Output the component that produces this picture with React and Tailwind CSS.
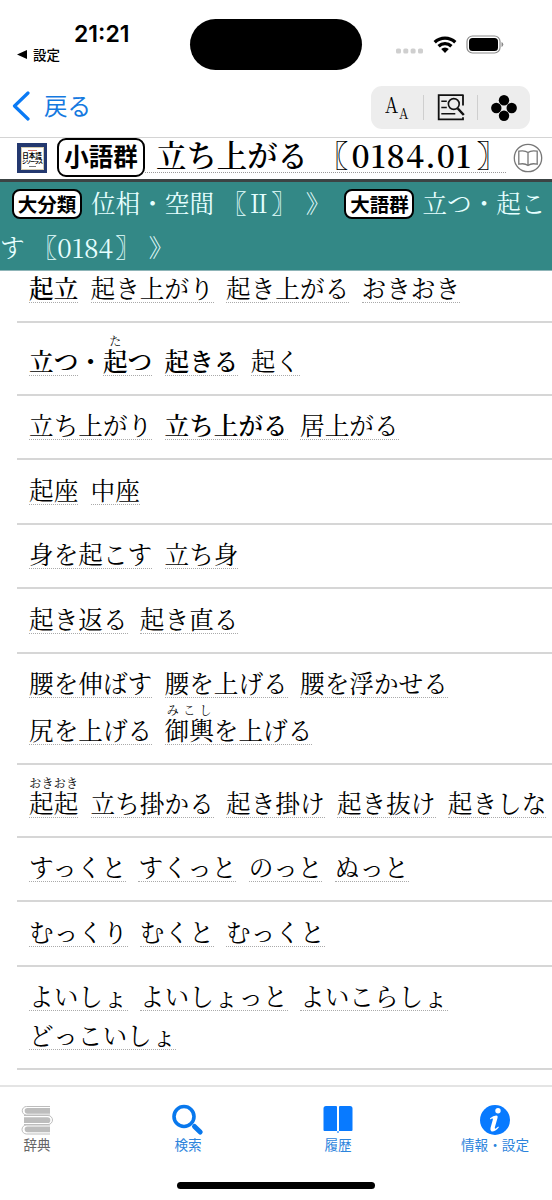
import React from "react";

const mincho = "font-['Noto_Serif_CJK_JP','Noto_Sans_CJK_JP',serif]";
const gothic = "font-['Noto_Sans_CJK_JP',sans-serif]";

// A word carries its text, an optional bold flag, and optional ruby as [base, reading].
const rows = [
  { h: "h-[52px]", lines: [[{ t: "起立", b: true }, { t: "起き上がり" }, { t: "起き上がる" }, { t: "おきおき" }]] },
  {
    h: "h-[73px]",
    lines: [[{ group: [{ t: "立つ", b: true }, { t: "・", b: true, plain: true }, { ruby: ["起", "た"], t: "つ", b: true }] }, { t: "起きる", b: true }, { t: "起く" }]],
  },
  { h: "h-[64px]", lines: [[{ t: "立ち上がり" }, { t: "立ち上がる", b: true }, { t: "居上がる" }]] },
  { h: "h-[65px]", lines: [[{ t: "起座" }, { t: "中座" }]] },
  { h: "h-[64px]", lines: [[{ t: "身を起こす" }, { t: "立ち身" }]] },
  { h: "h-[65px]", lines: [[{ t: "起き返る" }, { t: "起き直る" }]] },
  {
    h: "h-[111px]",
    gap: "gap-[17px]",
    lines: [
      [{ t: "腰を伸ばす" }, { t: "腰を上げる" }, { t: "腰を浮かせる" }],
      [{ t: "尻を上げる" }, { ruby: ["御輿", "みこし"], t: "を上げる" }],
    ],
  },
  {
    h: "h-[73px]",
    lines: [[{ ruby: ["起起", "おきおき"], t: "" }, { t: "立ち掛かる" }, { t: "起き掛け" }, { t: "起き抜け" }, { t: "起きしな" }]],
  },
  { h: "h-[64px]", lines: [[{ t: "すっくと" }, { t: "すくっと" }, { t: "のっと" }, { t: "ぬっと" }]] },
  { h: "h-[65px]", lines: [[{ t: "むっくり" }, { t: "むくと" }, { t: "むっくと" }]] },
  {
    h: "h-[103px]",
    gap: "gap-[9px]",
    lines: [[{ t: "よいしょ" }, { t: "よいしょっと" }, { t: "よいこらしょ" }], [{ t: "どっこいしょ" }]],
  },
];

function Word({ w }) {
  if (w.group) {
    return (
      <span className="flex">
        {w.group.map((g, i) => (
          <Word key={i} w={g} />
        ))}
      </span>
    );
  }
  return (
    <span
      className={`flex h-[30px] border-b leading-[30px] ${w.plain ? "border-transparent" : "border-dotted border-[#aaa]"} ${
        w.b ? "font-semibold" : "font-normal"
      }`}
    >
      {w.ruby && (
        <span className="relative">
          {w.ruby[0]}
          <span className="absolute -top-[12px] left-0 flex w-full justify-around text-[12px] leading-[14px] font-normal">
            {[...w.ruby[1]].map((c, i) => (
              <span key={i}>{c}</span>
            ))}
          </span>
        </span>
      )}
      {w.t}
    </span>
  );
}

function StatusBar() {
  return (
    <div className="flex h-[75px] shrink-0">
      <div className="w-[190px] pt-[20px]">
        <div className="pl-[74px] font-['Inter',sans-serif] text-[23px] leading-[29px] font-semibold">21:21</div>
        <div className={`flex items-center pl-[17px] text-[13.5px] leading-[10px] font-medium ${gothic}`}>
          <svg className="mr-[6px] h-[9px] w-[10px]" viewBox="0 0 10 9">
            <path d="M10 0v9L0 4.5z" />
          </svg>
          設定
        </div>
      </div>
      <div className="mt-[19px] h-[51px] w-[172px] rounded-full bg-black" />
      <div className="flex pl-[34px]">
        <svg className="mt-[48px] h-[6px] w-[28px]" viewBox="0 0 28 6" fill="#cfcfcf">
          <rect x="0" y=".5" width="5" height="5" rx="1.6" />
          <rect x="7.3" y=".5" width="5" height="5" rx="1.6" />
          <rect x="14.6" y=".5" width="5" height="5" rx="1.6" />
          <rect x="22" y=".5" width="5" height="5" rx="1.6" />
        </svg>
        <svg className="mt-[36px] ml-[9px] h-[17px] w-[24px]" viewBox="0 0 24 17" fill="none" stroke="#000" strokeWidth="3.3">
          <path d="M1.7 6.2a14.8 14.8 0 0 1 20.6 0M5.6 10.2a9.2 9.2 0 0 1 12.8 0" />
          <path d="M8.2 13.1a5.4 5.4 0 0 1 7.6 0L12 17z" fill="#000" stroke="none" />
        </svg>
        <svg className="mt-[35px] ml-[9px] h-[19px] w-[38px]" viewBox="0 0 38 19">
          <rect x="1" y="1" width="33" height="17" rx="5.5" fill="none" stroke="#8c8c8c" strokeWidth="1.2" />
          <rect x="3" y="3" width="29" height="13" rx="3.5" />
          <path d="M35.5 7v5q1.8-.6 1.8-2.5T35.500 7z" fill="#888" />
        </svg>
      </div>
    </div>
  );
}

function NavBar() {
  return (
    <div className="flex h-[63px] shrink-0 justify-between border-b border-[#d4d4d4] pr-[22px] pl-[12px]">
      <div className={`flex h-full items-center text-[23.5px] text-[#1479e0] ${gothic}`}>
        <svg className="mr-[14px] h-[30px] w-[18px]" viewBox="0 0 18 30" fill="none" stroke="#0a7af5" strokeWidth="3.2" strokeLinecap="round" strokeLinejoin="round">
          <path d="M16 2 2.500 15 16 28" />
        </svg>
        戻る
      </div>
      <div className="mt-[11px] flex h-[43px] w-[159px] items-center rounded-[11px] bg-[#ededed]">
        <div className={`flex h-[43px] w-[52px] pl-[14px] leading-none ${mincho}`}>
          <span className="mt-[7px] w-[14px] origin-left scale-x-[.82] text-[22px]">A</span>
          <span className="mt-[20px] origin-left scale-x-90 text-[14.5px]">A</span>
        </div>
        <div className="h-[25px] w-px bg-[#cfcfcf]" />
        <div className="flex w-[53px] justify-center">
          <svg className="-mt-[1px] h-[27px] w-[28px]" viewBox="0 0 28 27" fill="none" stroke="#111">
            <path d="M26 1.200H1.700V25.300H26v-2M26 0.500v11" strokeWidth="1.800" />
            <path d="M4.300 7.300h5.500M4.300 13.500h5.500M4.300 19.800h14" strokeWidth="1.500" />
            <circle cx="16.800" cy="10" r="5.400" strokeWidth="1.600" />
            <path d="m20.800 14.500 6 6.500" strokeWidth="2.500" />
          </svg>
        </div>
        <div className="h-[25px] w-px bg-[#cfcfcf]" />
        <div className="flex w-[52px] justify-center">
          <svg className="h-[26px] w-[26px]" viewBox="0 0 26 26">
            <circle cx="13" cy="5.300" r="5.200" />
            <circle cx="5.300" cy="13" r="5.200" />
            <circle cx="20.700" cy="13" r="5.200" />
            <circle cx="13" cy="20.700" r="5.200" />
          </svg>
        </div>
      </div>
    </div>
  );
}

function TitleBar() {
  return (
    <div className="flex h-[44px] shrink-0 border-b-[3px] border-[#3c4344] pl-[17px]">
      <div className={`mt-[5px] flex h-[30px] w-[30px] shrink-0 items-center justify-center bg-[#23386f] ${gothic}`}>
        <div className="flex h-[23px] w-[23px] flex-col items-center border border-[#d5ccb0] bg-white pt-[2px] leading-none font-bold text-black">
          <div className="mb-[1px] h-px w-[9px] bg-[#d06a5c]" />
          <span className="text-[6.5px] leading-[6px] whitespace-nowrap">日本語</span>
          <span className="text-[5px] leading-[6px] tracking-[-1px] whitespace-nowrap">シソーラス</span>
          <div className="mt-[2px] h-px w-[7px] bg-[#777]" />
        </div>
      </div>
      <div className={`ml-[10px] flex h-[39px] w-[88px] shrink-0 items-center justify-center rounded-[9px] border-2 border-black pb-[2px] text-[24.5px] leading-none font-bold ${gothic}`}>
        小語群
      </div>
      <div className={`flex h-[35px] w-[361px] shrink-0 border-b border-dotted border-[#999] pl-[11px] text-[30.4px] leading-[33px] font-semibold whitespace-nowrap ${mincho}`}>
        <span className="w-[152px] shrink-0">立ち上がる</span>
        <span className="ml-[10px] w-[30.4px] shrink-0 font-normal">〖</span>
        <span className="w-[128px] shrink-0 pl-[3px] text-[31.5px] tracking-[1.1px]">0184.01</span>
        <span className="shrink-0 font-normal">〗</span>
      </div>
      <svg className="mt-[5px] ml-[7px] h-[30px] w-[30px] shrink-0" viewBox="0 0 30 30" fill="none" stroke="#777" strokeWidth="1.300">
        <circle cx="15" cy="15" r="13.700" />
        <path d="M15 9.500c-2-1.600-5.500-2-9.200-1.300v13c3.700-.8 7.200-.3 9.200 1.200 2-1.500 5.500-2 9.200-1.200v-13c-3.700-.7-7.200-.3-9.200 1.300zM15 9.500v12.500" />
      </svg>
    </div>
  );
}

function Badge({ children }) {
  return (
    <span className={`mt-[7px] flex h-[30px] w-[70px] shrink-0 items-center justify-center rounded-[8px] border-2 border-black bg-white pb-[1px] text-[19.5px] leading-none font-bold text-black ${gothic}`}>
      {children}
    </span>
  );
}

function Breadcrumb() {
  return (
    <div className={`h-[89px] shrink-0 border-b border-[#8fb5b8] bg-[#338886] text-[24.6px] text-[#e6ffff] ${mincho}`}>
      <div className="flex h-[44px] pl-[12px] leading-[41px] whitespace-nowrap">
        <Badge>大分類</Badge>
        <span className="ml-[9px] w-[123px]">位相・空間</span>
        <span className="ml-[8px]">〖</span>
        <span>Ⅱ</span>
        <span>〗</span>
        <span className="ml-[10px]">》</span>
        <span className="w-[14px]" />
        <Badge>大語群</Badge>
        <span className="ml-[8px]">立つ・起こ</span>
      </div>
      <div className="flex h-[44px] leading-[41px] whitespace-nowrap">
        <span>す</span>
        <span className="ml-[8px]">〖</span>
        <span className="w-[58px] text-[26px]">0184</span>
        <span>〗</span>
        <span className="ml-[9px]">》</span>
      </div>
    </div>
  );
}

function WordList() {
  return (
    <div className={`flex-1 overflow-hidden pl-[17px] text-[24.65px] ${mincho}`}>
      {rows.map((row, i) => (
        <div key={i} className={`flex flex-col justify-end border-b-2 border-[#d6d6d6] pb-[18px] pl-[12px] whitespace-nowrap ${row.h} ${row.gap || ""}`}>
          {row.lines.map((line, j) => (
            <div key={j} className="flex gap-[12.3px]">
              {line.map((w, k) => (
                <Word key={k} w={w} />
              ))}
            </div>
          ))}
        </div>
      ))}
    </div>
  );
}

function Tab({ label, className, children }) {
  return (
    <div className={`flex flex-col items-center ${className}`}>
      <svg className="h-[32px] w-[32px]" viewBox="0 0 32 32">
        {children}
      </svg>
      <span className="mt-[1px] text-[13.6px] leading-[15px] whitespace-nowrap">{label}</span>
    </div>
  );
}

function TabBar() {
  return (
    <div className={`h-[115px] shrink-0 border-t-2 border-[#e4e4e4] ${gothic}`}>
      <div className="flex h-[95px] pt-[17px] text-[#2c84dc]">
        <Tab label="辞典" className="w-[74px] text-[#666]">
          <g fill="none" stroke="#bdbdbd" strokeWidth="1">
            <path d="M29 2.500H5.500a4 4 0 0 0 0 8.500H29M3 11.500h24a4.300 4.300 0 0 1 0 9H3M29 21H5.500a4 4 0 0 0 0 9H29" />
          </g>
          <path d="M29 4H6.500a2.800 2.800 0 0 0 0 5.700H29zM3 13.300h23.500a2.800 2.800 0 0 1 0 5.700H3zM29 22.500H6.500a2.800 2.800 0 0 0 0 5.700H29z" fill="#bdbdbd" />
        </Tab>
        <Tab label="検索" className="w-[228px]">
          <g fill="none" stroke="#0878ed">
            <circle cx="12" cy="12.500" r="10" strokeWidth="3.600" />
            <path d="m22.500 22.500 5.700 5.500" strokeWidth="5" strokeLinecap="round" />
          </g>
        </Tab>
        <Tab label="履歴" className="w-[72px]">
          <path d="M4 2h10q1 0 1 1v24H2.500q-1 0-1-1V4.500Q1.500 2 4 2zM18 2h10q2.500 0 2.500 2.500V26q0 1-1 1H17V3q0-1 1-1z" fill="#087aff" />
          <path d="M15 27h2v2h-2z" fill="#087aff" opacity=".55" />
        </Tab>
        <div className="flex-1 pl-[64px]">
          <Tab label="情報・設定" className="w-[114px]">
            <circle cx="16" cy="16" r="15" fill="#087aff" />
            <circle cx="19" cy="6.700" r="2.700" fill="#fff" />
            <path d="M11 14.300q4-3.200 7.200-2.600.8.400.3 2.300l-2.700 9.500q-.2 1.500 1 1l2.500-2 .6.700q-3.900 4.700-7.300 4.300-1.800-.6-1.100-3.500l2.300-8.300q.4-1.700-.9-1.100l-1.500.8z" fill="#fff" />
          </Tab>
        </div>
      </div>
      <div className="mx-auto h-[7px] w-[198px] rounded-full bg-black" />
    </div>
  );
}

export default function App() {
  return (
    <div className="flex h-[1200px] w-[552px] flex-col overflow-hidden bg-white text-black" lang="ja">
      <StatusBar />
      <NavBar />
      <TitleBar />
      <Breadcrumb />
      <WordList />
      <TabBar />
    </div>
  );
}
